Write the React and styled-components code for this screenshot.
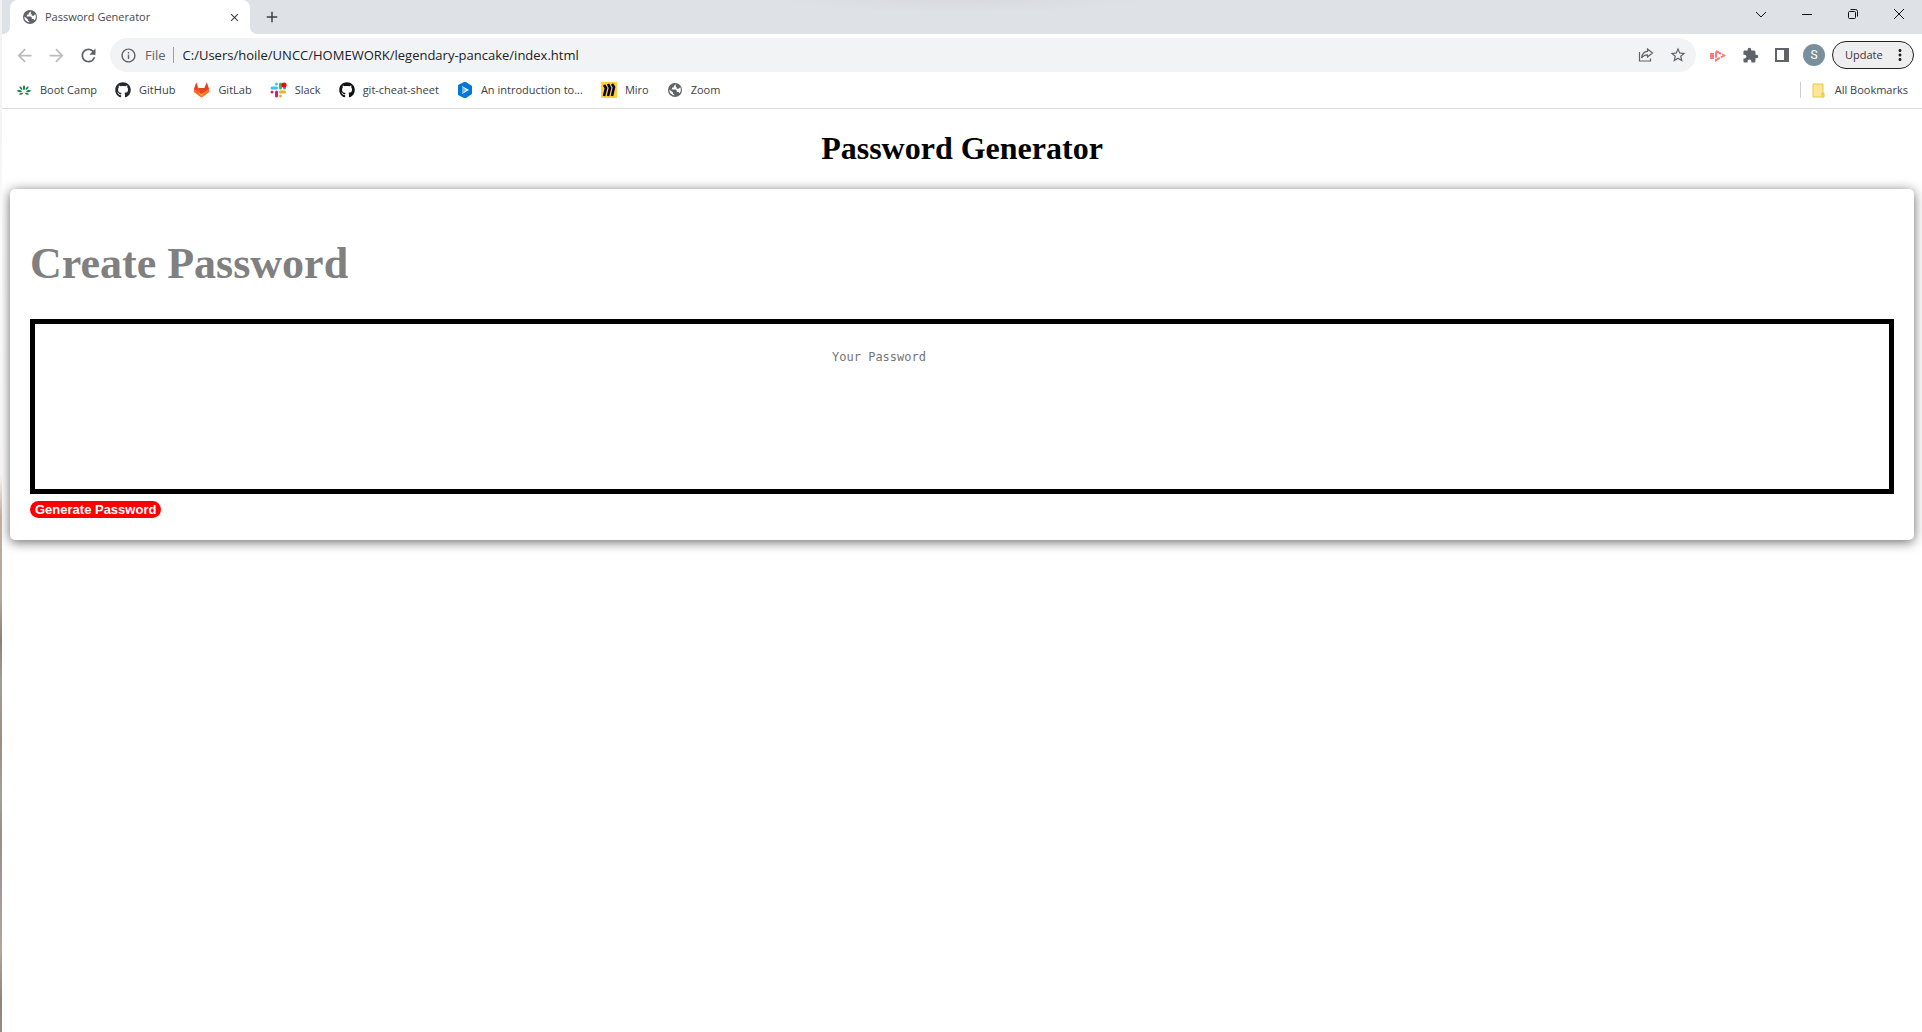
import React from "react";
import styled, { createGlobalStyle, css } from "styled-components";
import { FaGithub } from "react-icons/fa";
import {
  MdArrowBack,
  MdArrowForward,
  MdRefresh,
  MdInfoOutline,
  MdStarBorder,
  MdExtension,
  MdMoreVert,
  MdClose,
  MdAdd,
} from "react-icons/md";

const uiFont = '"Open Sans", "Noto Sans", sans-serif';

const GlobalStyle = createGlobalStyle`
  * { box-sizing: border-box; }
  body { margin: 0; background: #fff; }
`;

const Window = styled.div`
  display: grid;
  grid-template-columns: 2px minmax(0, 1fr);
  min-height: 100vh;
`;

const DesktopEdge = styled.div`
  background: linear-gradient(
    #f3f3f3 0%, #f3f3f3 10%, #fbfbfb 24%, #f6f3f0 46%, #c0aca2 50%,
    #b0aaa0 58%, #8d8078 62%, #a0a098 66%, #9b8d85 72%, #a3a19b 77%,
    #998d87 81%, #a09a9a 86%, #b0a69c 92%, #91847c 97%, #968a84 100%
  );
`;

const Browser = styled.div`
  min-width: 0;
  overflow: hidden;
`;

const TabStrip = styled.header`
  display: flex;
  height: 34px;
  background:
    radial-gradient(ellipse 190px 12px at 50% 0, #d8dadf, #dee1e6) no-repeat,
    #dee1e6;
  font-family: ${uiFont};
`;

const Tab = styled.div`
  position: relative;
  display: flex;
  align-items: center;
  gap: 7px;
  width: 240px;
  margin-left: 8px;
  padding: 0 8px 0 12px;
  border-radius: 8px 8px 0 0;
  background: #fff;
  color: #45494d;
  font-size: 11px;
  line-height: 16px;
  span { flex: 1; }
  &::before,
  &::after {
    content: "";
    position: absolute;
    bottom: 0;
    width: 8px;
    height: 8px;
  }
  &::before {
    right: 100%;
    background: radial-gradient(circle at 0 0, transparent 8px, #fff 8px);
  }
  &::after {
    left: 100%;
    background: radial-gradient(circle at 100% 0, transparent 8px, #fff 8px);
  }
`;

const IconButton = styled.button`
  display: flex;
  align-items: center;
  justify-content: center;
  flex: none;
  width: ${(p) => p.$width || 32}px;
  height: ${(p) => p.$height || 32}px;
  padding: 0;
  border: 0;
  background: none;
  color: ${(p) => p.$color || "#5f6368"};
`;

const WindowControls = styled.div`
  display: flex;
  margin-left: auto;
`;

const Toolbar = styled.nav`
  display: flex;
  align-items: center;
  height: 42px;
  padding: 4px 8px 4px 6px;
  font-family: ${uiFont};
`;

const Omnibox = styled.div`
  display: flex;
  align-items: center;
  flex: 1;
  min-width: 0;
  height: 34px;
  margin-left: 6px;
  padding: 0 2px 0 10px;
  border-radius: 17px;
  background: #f1f3f4;
  color: #5f6368;
  font-size: 13px;
  label { padding: 0 7px 0 8px; border-right: 1px solid #9aa0a6; line-height: 16px; }
`;

const Address = styled.input`
  flex: 1;
  min-width: 0;
  padding: 0 0 0 9px;
  border: 0;
  outline: 0;
  background: none;
  color: #202124;
  font: 13px/20px ${uiFont};
`;

const Extensions = styled.div`
  display: flex;
  align-items: center;
  padding-left: 6px;
`;

const Avatar = styled.button`
  width: 22px;
  height: 22px;
  margin: 0 7px 0 5px;
  padding: 0;
  border: 0;
  border-radius: 50%;
  background: #78909c;
  color: #fff;
  font: 12px/22px Roboto, sans-serif;
`;

const UpdateButton = styled.button`
  display: flex;
  align-items: center;
  justify-content: space-between;
  width: 82px;
  height: 28px;
  padding: 0 4px 0 12px;
  border: 1px solid #202124;
  border-radius: 14px;
  background: #eee;
  color: #3c3040;
  font: 11px/16px ${uiFont};
`;

const Bookmarks = styled.nav`
  display: flex;
  align-items: center;
  gap: 18px;
  height: 33px;
  padding: 0 14px 4px;
  border-bottom: 1px solid #dadce0;
  font-family: ${uiFont};
`;

const Bookmark = styled.a`
  display: flex;
  align-items: center;
  gap: 8px;
  color: #3c4043;
  font-size: 11px;
  line-height: 16px;
  text-decoration: none;
  white-space: nowrap;
  svg { flex: none; }
  ${(p) =>
    p.$last &&
    css`
      gap: 10px;
      margin-left: auto;
      padding-left: 11px;
      border-left: 1px solid #ccc;
    `}
`;

const Page = styled.main`
  padding: 0 8px;
  font-family: "Liberation Serif", "Times New Roman", serif;
`;

const PageTitle = styled.h1`
  margin: 0;
  padding: 20px 0 22px;
  color: #000;
  font-size: 32px;
  line-height: 38px;
  text-align: center;
`;

const Card = styled.section`
  padding: 48px 20px 22px;
  border-radius: 5px;
  background: #fff;
  box-shadow: 0 2px 12px rgba(0, 0, 0, 0.6);
`;

const CardTitle = styled.h2`
  margin: 0 0 28px;
  color: #808080;
  font-size: 44px;
  line-height: 54px;
`;

const Output = styled.textarea`
  display: block;
  width: 100%;
  height: 175px;
  margin-bottom: 7px;
  padding: 25px 166px 0 0;
  border: 5px solid #000;
  outline: 0;
  resize: none;
  background: #fff;
  font: 12px/16px "DejaVu Sans Mono", monospace;
  text-align: center;
  &::placeholder { color: #757575; }
`;

const Generate = styled.button`
  display: block;
  height: 17px;
  padding: 0 5px;
  border: 0;
  border-radius: 9px;
  background: #f00;
  color: #fff;
  font: bold 13px/17px "Liberation Sans", Arial, sans-serif;
`;

const GlobeIcon = () => (
  <svg width="16" height="16" viewBox="0 0 16 16">
    <circle cx="8" cy="8" r="7" fill="#5f6368" />
    <path
      d="M9 2.200 6.800 4v1.600H5.200L4.600 7.500h3.800c1 0 1.400.8 1.400 1.600v1h1.600l1.200 1.200a5.600 5.600 0 0 0 .6-6l-1.600 1.500H9.800V5.200h-1V3.800zM2.300 7.600l3.700 3v1.200l1.400 1v.8A5.700 5.700 0 0 1 2.300 7.600z"
      fill="#fff"
    />
  </svg>
);

const BootCampIcon = () => (
  <svg width="16" height="16" viewBox="0 0 16 16" fill="#14804a">
    <path d="M8 3c1.500 1.600 1.500 3.800 0 5.600C6.500 6.800 6.500 4.600 8 3zM3.400 4.300c1.900.3 3 1.700 3.100 3.800-1.900-.4-3-1.800-3.100-3.800zM12.600 4.300c-1.900.3-3 1.700-3.100 3.800 1.900-.4 3-1.800 3.100-3.800zM.8 8.400c2-.9 3.900-.6 5.200 1C4.200 10.700 2.200 10.200.8 8.400zM15.200 8.400c-2-.9-3.900-.6-5.200 1 1.800 1.300 3.800.8 5.200-1zM3 12.500c.9-1.700 2.400-2.100 4.200-1.400-.8 1.600-2.300 2.100-4.200 1.400zM13 12.500c-.9-1.700-2.400-2.100-4.200-1.400.8 1.600 2.300 2.100 4.200 1.400z" />
  </svg>
);

const GitLabIcon = () => (
  <svg width="17" height="16" viewBox="0 0 18 16">
    <path fill="#fc6d26" d="M1 8 3.500 0l2.300 6h6.400l2.300-6L17 8v2l-8 6-8-6z" />
    <path fill="#e24329" d="m9 16-4-9.500L3.500 0 1 7l4 2 4 3 4-3 4-2-2.500-7-2.300 6H5.800z" />
    <path fill="#fca326" d="m5.500 10.500 3.500 2 3.500-2L9 16z" />
    <path fill="#fc6d26" d="m1 7.500 4.500 3L9 16l-8-6zM17 7.500l-4.500 3L9 16l8-6z" />
  </svg>
);

const SlackIcon = () => (
  <svg width="17" height="16" viewBox="0 0 17 16" strokeWidth="3" strokeLinecap="round">
    <path stroke="#36c5f0" d="M6.500 2v0M2 6h4.500" />
    <path stroke="#2eb67d" d="M10.500 2v4M14.500 6v0" />
    <path stroke="#ecb22e" d="M10.500 14v0M10.500 10h4" />
    <path stroke="#e01e5a" d="M6.500 10v4M2 10v0" />
    <circle cx="14" cy="3" r="2.600" fill="#f00" />
  </svg>
);

const IntroIcon = () => (
  <svg width="16" height="16" viewBox="0 0 16 16">
    <path fill="#0078d7" d="M7 0 1 3v10l6 3h2l6-4V4L9 0z" />
    <path fill="#fff" d="m5 4 7 4-7 4z" />
    <path fill="#6cb8f0" d="m5 4 4 4-4 4z" />
  </svg>
);

const MiroIcon = () => (
  <svg width="16" height="16" viewBox="0 0 16 16">
    <rect width="16" height="16" rx="1" fill="#ffd02f" />
    <path d="m3 3 2 3-2 8M7 2l2 4-2 8M11 2l2 3-2 9" stroke="#050038" strokeWidth="2.600" fill="none" />
  </svg>
);

const FolderIcon = () => (
  <svg width="13" height="15" viewBox="0 0 13 15">
    <path d="M1 1h10v13H1zM10 10h2v4h-2z" fill="#ffe694" stroke="#e8c64a" />
  </svg>
);

const ShareIcon = () => (
  <svg width="16" height="16" viewBox="0 0 16 16" fill="none" stroke="#5f6368" strokeWidth="1.200">
    <path d="M1.500 5v9h11v-2.500M9.500 2l5 4-5 4V7.800C7 7.800 5 8.500 3.600 11 4 7 6.200 4.600 9.500 4.400z" />
  </svg>
);

const RecorderIcon = () => (
  <svg width="16" height="13" viewBox="0 0 16 13" fill="#ff7b7b">
    <path d="M0 4h4v6H0z" />
    <path
      d="M6 1.800 14 6.500 6 11.200z"
      fill="none"
      stroke="#ff7b7b"
      strokeWidth="2"
      strokeDasharray="6 1"
    />
  </svg>
);

const SidePanelIcon = () => (
  <svg width="14" height="14" viewBox="0 0 14 14">
    <path d="M1 1h12v12H1z" fill="#fff" stroke="#5f6368" strokeWidth="2" />
    <path d="M9 1h4v12H9z" fill="#5f6368" />
  </svg>
);

const controls = [
  ["Search tabs", "m0 3 5 5 5-5"],
  ["Minimize", "M0 5.500h10"],
  ["Restore", "M1.500 2.500h5a1 1 0 0 1 1 1v5a1 1 0 0 1-1 1h-5a1 1 0 0 1-1-1v-5a1 1 0 0 1 1-1zM2.500.5h5a2 2 0 0 1 2 2v5"],
  ["Close window", "m0 0 10 10M10 0 0 10"],
];

const bookmarks = [
  ["Boot Camp", <BootCampIcon />],
  ["GitHub", <FaGithub size={16} color="#24292e" />],
  ["GitLab", <GitLabIcon />],
  ["Slack", <SlackIcon />],
  ["git-cheat-sheet", <FaGithub size={16} color="#111" />],
  ["An introduction to...", <IntroIcon />],
  ["Miro", <MiroIcon />],
  ["Zoom", <GlobeIcon />],
];

export default function App() {
  return (
    <Window>
      <GlobalStyle />
      <DesktopEdge />
      <Browser>
        <TabStrip>
          <Tab>
            <GlobeIcon />
            <span>Password Generator</span>
            <IconButton $width={16} $height={16} $color="#3c4043" aria-label="Close tab">
              <MdClose size={13} />
            </IconButton>
          </Tab>
          <IconButton $width={44} $height={34} $color="#3c4043" aria-label="New tab">
            <MdAdd size={18} />
          </IconButton>
          <WindowControls>
            {controls.map(([name, d]) => (
              <IconButton key={name} $width={46} $height={28} $color="#111" aria-label={name}>
                <svg width="10" height="10" viewBox="0 0 10 10" fill="none" stroke="currentColor" overflow="visible">
                  <path d={d} />
                </svg>
              </IconButton>
            ))}
          </WindowControls>
        </TabStrip>
        <Toolbar>
          <IconButton $color="#babcbe" aria-label="Back"><MdArrowBack size={21} /></IconButton>
          <IconButton $color="#babcbe" aria-label="Forward"><MdArrowForward size={21} /></IconButton>
          <IconButton aria-label="Reload"><MdRefresh size={21} /></IconButton>
          <Omnibox>
            <MdInfoOutline size={17} />
            <label htmlFor="address">File</label>
            <Address id="address" defaultValue="C:/Users/hoile/UNCC/HOMEWORK/legendary-pancake/index.html" />
            <IconButton aria-label="Share"><ShareIcon /></IconButton>
            <IconButton aria-label="Bookmark this page"><MdStarBorder size={18} /></IconButton>
          </Omnibox>
          <Extensions>
            <IconButton aria-label="Recorder"><RecorderIcon /></IconButton>
            <IconButton aria-label="Extensions"><MdExtension size={17} /></IconButton>
            <IconButton aria-label="Side panel"><SidePanelIcon /></IconButton>
            <Avatar aria-label="Profile">S</Avatar>
            <UpdateButton>
              Update
              <MdMoreVert size={18} color="#202124" />
            </UpdateButton>
          </Extensions>
        </Toolbar>
        <Bookmarks>
          {bookmarks.map(([name, icon]) => (
            <Bookmark key={name} href="#">{icon}{name}</Bookmark>
          ))}
          <Bookmark $last href="#"><FolderIcon />All Bookmarks</Bookmark>
        </Bookmarks>
        <Page>
          <PageTitle>Password Generator</PageTitle>
          <Card>
            <CardTitle>Create Password</CardTitle>
            <Output placeholder="Your Password" aria-label="Your Password" />
            <Generate>Generate Password</Generate>
          </Card>
        </Page>
      </Browser>
    </Window>
  );
}
